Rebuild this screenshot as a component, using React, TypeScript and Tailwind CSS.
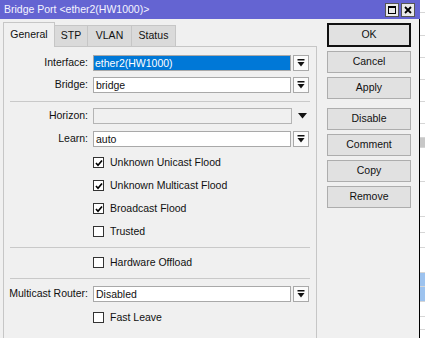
import React from "react";

function DropIcon() {
  return (
    <svg width="8" height="8" viewBox="0 0 8 8">
      <rect x="0.5" y="0" width="7" height="1.5" fill="#111" />
      <path d="M0.5 3h7L4 7.5z" fill="#111" />
    </svg>
  );
}

function Combo({ label, value, selected }: { label: string; value: string; selected?: boolean }) {
  return (
    <div className="flex items-center h-[16px]">
      <div className="w-[84px] text-right whitespace-nowrap">{label}</div>
      <div
        className={
          selected
            ? "ml-[5px] w-[198px] h-full border border-[#a9a9a9] bg-[#0078d7] text-white pl-[1px] leading-[14px]"
            : "ml-[5px] w-[198px] h-full border border-[#a9a9a9] bg-white pl-[2px] leading-[14px]"
        }
      >
        {value}
      </div>
      <div className="ml-[2px] w-[16px] h-full border border-[#a9a9a9] bg-[#fbfbfb] flex items-center justify-center">
        <DropIcon />
      </div>
    </div>
  );
}

function Check({ label, checked }: { label: string; checked?: boolean }) {
  return (
    <div className="flex items-center h-[23px] pl-[89px]">
      <div className="w-[11px] h-[11px] border border-[#333] bg-white flex items-center justify-center">
        {checked && (
          <svg width="8" height="8" viewBox="0 0 8 8">
            <path d="M1 4l2 2.2L7 1.5" stroke="#000" strokeWidth="1.7" fill="none" />
          </svg>
        )}
      </div>
      <span className="ml-[6px]">{label}</span>
    </div>
  );
}

function Sep({ mt }: { mt: string }) {
  return <div className={`${mt} ml-[6px] w-[300px] h-px bg-[#c9c9c9]`} />;
}

function Btn({ label, primary, className = "" }: { label: string; primary?: boolean; className?: string }) {
  return (
    <div
      className={
        (primary
          ? "h-[24px] border-2 border-[#111] "
          : "h-[22px] border border-[#adadad] ") +
        "bg-[#e1e1e1] flex items-center justify-center " +
        className
      }
    >
      {label}
    </div>
  );
}

export default function App() {
  const stripRows = [
    { h: 13, bg: "bg-white" },
    { h: 23, bg: "bg-white" },
    { h: 22, bg: "bg-white" },
    { h: 22, bg: "bg-white" },
    { h: 22, bg: "bg-white" },
    { h: 22, bg: "bg-white" },
    { h: 14, bg: "bg-white" },
    { h: 10, bg: "bg-[#c8c8c8]" },
    { h: 34, bg: "bg-white" },
    { h: 35, bg: "bg-white" },
    { h: 16, bg: "bg-white" },
    { h: 15, bg: "bg-white" },
    { h: 25, bg: "bg-white" },
    { h: 14, bg: "bg-[#9dc3ef]" },
    { h: 15, bg: "bg-[#9dc3ef]" },
    { h: 15, bg: "bg-white" },
    { h: 13, bg: "bg-white" },
    { h: 10, bg: "bg-white" },
  ];

  return (
    <div className="w-[425px] h-[338px] flex overflow-hidden font-['Liberation_Sans',Arial,sans-serif] text-[10.5px] text-[#111]">
      {/* window */}
      <div className="w-[420px] h-full flex flex-col">
        <div className="h-[19px] bg-[#6464d2] flex items-center pl-[4px] pr-[5px] text-[#f4f4ff] text-[10.5px]">
          <span className="flex-1">Bridge Port &lt;ether2(HW1000)&gt;</span>
          <div className="w-[14px] h-[14px] bg-[#e9e9e9] border border-[#555] flex items-center justify-center">
            <div className="w-[8px] h-[8px] border border-black border-t-2" />
          </div>
          <div className="ml-[2px] w-[14px] h-[14px] bg-[#e9e9e9] border border-[#555] flex items-center justify-center">
            <svg width="8" height="8" viewBox="0 0 8 8">
              <path d="M1 1l6 6M7 1l-6 6" stroke="#000" strokeWidth="1.8" />
            </svg>
          </div>
        </div>

        <div className="flex-1 bg-[#f0f0f0] border-r border-black flex pt-[3px]">
          {/* left tab panel */}
          <div className="ml-[3px] w-[314px] flex flex-col">
            <div className="flex items-end h-[24px] relative z-10">
              <div className="w-[52px] h-[25px] -mb-px border border-b-0 border-[#c6c6c6] bg-[#f0f0f0] flex items-center justify-center">
                General
              </div>
              <div className="w-[33px] h-[21px] border-t border-r border-[#c6c6c6] bg-[#dadada] flex items-center justify-center">
                STP
              </div>
              <div className="w-[44px] h-[21px] border-t border-r border-[#c6c6c6] bg-[#dadada] flex items-center justify-center">
                VLAN
              </div>
              <div className="w-[44px] h-[21px] border-t border-r border-[#c6c6c6] bg-[#dadada] flex items-center justify-center">
                Status
              </div>
            </div>
            <div className="flex-1 border border-b-0 border-[#c6c6c6] pt-[8px]">
              <Combo label="Interface:" value="ether2(HW1000)" selected />
              <div className="mt-[6px]">
                <Combo label="Bridge:" value="bridge" />
              </div>
              <Sep mt="mt-[8px]" />
              <div className="mt-[6px] flex items-center h-[16px]">
                <div className="w-[84px] text-right">Horizon:</div>
                <div className="ml-[5px] w-[199px] h-full border border-[#b4b4b4] bg-[#f0f0f0]" />
                <div className="ml-[5px] w-[10px] flex items-center justify-center">
                  <svg width="9" height="6" viewBox="0 0 9 6">
                    <path d="M0 0h9L4.5 5.5z" fill="#111" />
                  </svg>
                </div>
              </div>
              <div className="mt-[7px]">
                <Combo label="Learn:" value="auto" />
              </div>
              <div className="mt-[4px]">
                <Check label="Unknown Unicast Flood" checked />
                <Check label="Unknown Multicast Flood" checked />
                <Check label="Broadcast Flood" checked />
                <Check label="Trusted" />
              </div>
              <Sep mt="mt-[4px]" />
              <div className="mt-[3px]">
                <Check label="Hardware Offload" />
              </div>
              <Sep mt="mt-[4px]" />
              <div className="mt-[7px]">
                <Combo label="Multicast Router:" value="Disabled" />
              </div>
              <div className="mt-[4px]">
                <Check label="Fast Leave" />
              </div>
            </div>
          </div>

          {/* buttons */}
          <div className="ml-[10px] w-[84px] mt-[1px] flex flex-col">
            <Btn label="OK" primary />
            <Btn label="Cancel" className="mt-[4px]" />
            <Btn label="Apply" className="mt-[4px]" />
            <Btn label="Disable" className="mt-[9px]" />
            <Btn label="Comment" className="mt-[4px]" />
            <Btn label="Copy" className="mt-[4px]" />
            <Btn label="Remove" className="mt-[4px]" />
          </div>
        </div>
      </div>

      {/* list behind the dialog */}
      <div className="w-[5px] h-full flex flex-col">
        {stripRows.map((r, i) => (
          <div
            key={i}
            className={`${r.bg} border-b border-[#d6d6d6] shrink-0`}
            style={{ height: r.h }}
          />
        ))}
      </div>
    </div>
  );
}
